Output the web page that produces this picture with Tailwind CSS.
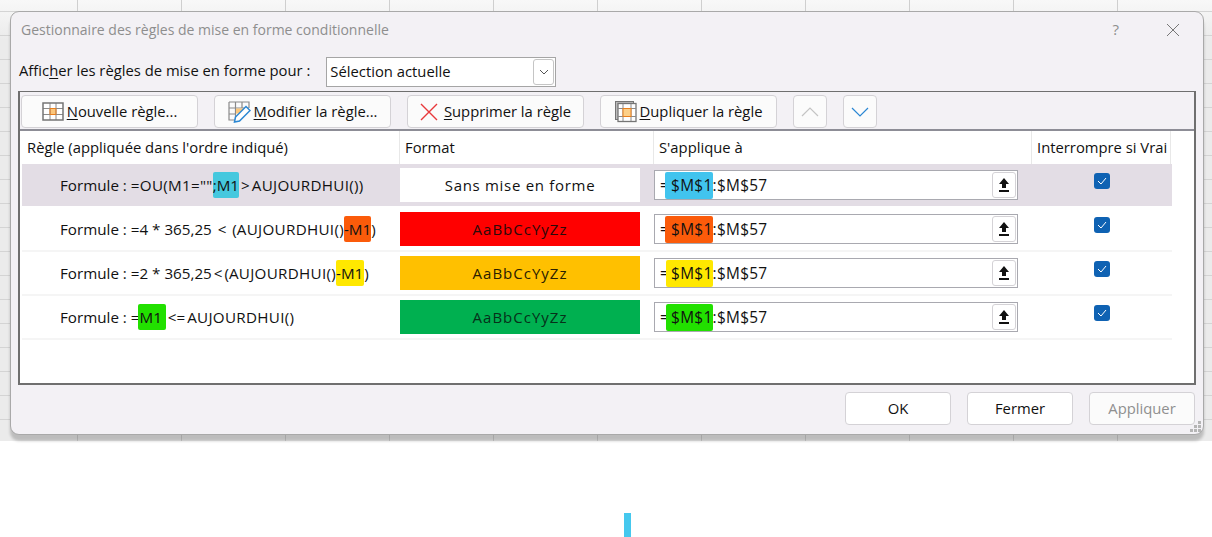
<!DOCTYPE html>
<html lang="fr">
<head>
<meta charset="UTF-8">
<title>Gestionnaire des règles de mise en forme conditionnelle</title>
<script src="https://cdn.jsdelivr.net/npm/@tailwindcss/browser@4"></script>
</head>
<body class="bg-white font-['Open_Sans',sans-serif] text-[14.8px] text-[#111] overflow-hidden">
<div class="w-[1212px] h-[537px] flex flex-col">
  <!-- excel sheet behind the dialog -->
  <div class="h-[441px] pt-[11px] pl-[10px] bg-[linear-gradient(to_right,#cfcfcf_1px,transparent_1px),linear-gradient(to_bottom,#d4d4d4_1px,transparent_1px),linear-gradient(to_bottom,#f8f8f8,#ebebeb_40px)] bg-[size:104px_24px,104px_24px,100%_100%] bg-[position:77px_11px,77px_11px,0_0]">
    <div class="w-[1194px] h-[424px] flex flex-col bg-[#f3f1f5] border border-[#a9a9a9] rounded-[9px] shadow-[0_6px_3px_rgba(0,0,0,0.2)]">
      <!-- title -->
      <div class="h-[35px] flex items-center pl-[10px] pr-[23px] text-[#8e8e8e] text-[14px]">
        <span>Gestionnaire des règles de mise en forme conditionnelle</span>
        <span class="ml-auto text-[15px]">?</span>
        <svg class="ml-[47px]" width="14" height="14" viewBox="0 0 14 14"><path d="M1 1l12 12M13 1L1 13" stroke="#777" stroke-width="1" fill="none"/></svg>
      </div>
      <!-- show rules for -->
      <div class="h-[34px] mt-[8px] flex items-center pl-[8px]">
        <span class="mr-[16px] -mt-[4px]">Affic<span class="underline underline-offset-2">h</span>er les règles de mise en forme pour :</span>
        <div class="w-[230px] h-[30px] bg-white border border-[#a5a5a5] flex items-center justify-between pl-[3px] pr-[1px]">
          <span class="-mt-[1px]">Sélection actuelle</span>
          <span class="w-[21px] h-[26px] border border-[#c5c5c5] rounded-[3px] flex items-center justify-center">
            <svg width="10" height="6" viewBox="0 0 10 6"><path d="M1 1l4 4 4-4" stroke="#555" fill="none"/></svg>
          </span>
        </div>
      </div>
      <!-- rules box -->
      <div class="w-[1178px] h-[294px] ml-[7px] mt-[2px] border-2 border-t border-[#6f6f6f] flex flex-col">
        <div class="h-[39px] flex items-start pt-[3px] pl-[1px] border-b-2 border-[#8d8d96]">
          <button class="w-[177px] h-[33px] bg-[#fbfbfb] border border-[#d4d2d6] rounded-[4px] flex items-center justify-center gap-[3px]">
            <svg width="22" height="19" viewBox="0 0 22 19"><rect x="1" y="1" width="20" height="17" fill="#fff"/><rect x="8" y="6.500" width="6" height="6" fill="#fbc77d"/><path d="M8 1v17M14 1v17M1 6.500h20M1 12.500h20" stroke="#8a8a8a" fill="none"/><path d="M8 6.500h6v6H8z" fill="none" stroke="#e87f1e"/><rect x="1" y="1" width="20" height="17" fill="none" stroke="#757575" stroke-width="1.500"/></svg>
            <span><span class="underline underline-offset-2">N</span>ouvelle règle...</span>
          </button>
          <button class="w-[177px] h-[33px] ml-[16px] bg-[#fbfbfb] border border-[#d4d2d6] rounded-[4px] flex items-center justify-center gap-[3px]">
            <svg width="23" height="23" viewBox="0 0 23 23"><path d="M1 2h20v6M1 2v18h7M7.500 2v18M14 2v6M1 8h20M1 14h7" stroke="#8a8a8a" stroke-width="1.200" fill="none"/><rect x="8" y="8.500" width="8" height="5" fill="#fbc77d"/><path d="M6.500 22l1-5L18 6.500l4 4L11.500 21z" fill="#fff" stroke="#2b87d3" stroke-width="1.500"/></svg>
            <span><span class="underline underline-offset-2">M</span>odifier la règle...</span>
          </button>
          <button class="w-[177px] h-[33px] ml-[16px] bg-[#fbfbfb] border border-[#d4d2d6] rounded-[4px] flex items-center justify-center gap-[6px]">
            <svg width="18" height="18" viewBox="0 0 18 18"><path d="M1 1l16 16M17 1L1 17" stroke="#e8383b" stroke-width="1.400" fill="none"/></svg>
            <span><span class="underline underline-offset-2">S</span>upprimer la règle</span>
          </button>
          <button class="w-[177px] h-[33px] ml-[16px] bg-[#fbfbfb] border border-[#d4d2d6] rounded-[4px] flex items-center justify-center gap-[3px]">
            <svg width="22" height="22" viewBox="0 0 22 22"><rect x="0.500" y="0.500" width="18" height="18" fill="#bbb" stroke="#757575"/><rect x="3" y="2.500" width="18" height="18" fill="#fff" stroke="#757575" stroke-width="1.300"/><path d="M8 3v17M16 3v17M3 7.500h18M3 15.500h18" stroke="#8a8a8a" fill="none"/><rect x="8" y="7.500" width="8" height="8" fill="#fcd089" stroke="#e87f1e"/></svg>
            <span><span class="underline underline-offset-2">D</span>upliquer la règle</span>
          </button>
          <button class="w-[34px] h-[33px] ml-[16px] bg-[#fbfbfb] border border-[#d4d2d6] rounded-[4px] flex items-center justify-center">
            <svg width="18" height="10" viewBox="0 0 18 10"><path d="M1 9l8-8 8 8" stroke="#c4c4c4" stroke-width="1.200" fill="none"/></svg>
          </button>
          <button class="w-[34px] h-[33px] ml-[16px] bg-[#fbfbfb] border border-[#d4d2d6] rounded-[4px] flex items-center justify-center">
            <svg width="18" height="10" viewBox="0 0 18 10"><path d="M1 1l8 8 8-8" stroke="#2b87d3" stroke-width="1.200" fill="none"/></svg>
          </button>
        </div>
        <div class="flex-1 bg-white">
          <!-- header -->
          <div class="h-[33px] flex items-center">
            <div class="w-[380px] h-full pl-[7px] flex items-center border-r border-[#e8e8e8]">Règle (appliquée dans l'ordre indiqué)</div>
            <div class="w-[254px] h-full pl-[5px] flex items-center border-r border-[#e8e8e8]">Format</div>
            <div class="w-[378px] h-full pl-[5px] flex items-center border-r border-[#e8e8e8]">S'applique à</div>
            <div class="w-[139px] h-full pl-[5px] flex items-center border-r border-[#e8e8e8] whitespace-nowrap">Interrompre si Vrai</div>
          </div>
          <!-- rows -->
          <div class="w-[1150px] h-[44px] flex items-center bg-[#e3dde5] border-b-2 border-white ml-[2px]">
            <div class="w-[378px] pl-[38px] whitespace-nowrap text-[15.2px]">Formule : <span class="tracking-[0.3px]">=OU(M1=""</span><span class="bg-[#45c8de] py-[3px] rounded-[2px]">;M1</span><span class="mx-[2px]">&gt;</span><span class="tracking-[0.3px]">AUJOURDHUI())</span></div>
            <div class="w-[240px] h-[34px] bg-white flex items-center justify-center text-[15px] tracking-[0.7px]">Sans mise en forme</div>
            <div class="w-[364px] h-[30px] ml-[14px] bg-white border border-[#a9a9b0] flex items-center pl-[5px] pr-[1px] text-[15.4px] tracking-[0.3px]">
              <span class="pt-[2px]">=<span class="bg-[#41c4ee] py-[3px] pl-[6px] -ml-[4px] rounded-[2px]">$M$1</span>:$M$57</span>
              <span class="ml-auto w-[24px] h-[26px] border border-[#d4d2d6] rounded-[3px] bg-white flex items-center justify-center">
                <svg width="10" height="14" viewBox="0 0 10 14"><path d="M5 0L0 6h3v4h4V6h3zM0 12h10v2H0z" fill="#111"/></svg>
              </span>
            </div>
            <div class="w-[154px] pl-[76px]">
              <span class="w-[16px] h-[16px] bg-[#0f62b3] rounded-[3px] flex items-center justify-center -mt-[8px]">
                <svg width="10" height="8" viewBox="0 0 10 8"><path d="M1 4l3 3 5-6" stroke="#fff" stroke-width="1" fill="none"/></svg>
              </span>
            </div>
          </div>
          <div class="w-[1150px] h-[44px] flex items-center border-b-2 border-[#f5f5f5] ml-[2px]">
            <div class="w-[378px] pl-[38px] whitespace-nowrap text-[15.2px]">Formule : =4 * 365,25 <span class="mx-[2px]">&lt;</span> (<span class="tracking-[0.3px]">AUJOURDHUI()</span><span class="bg-[#fb5b0a] py-[3px] rounded-[2px]">-M1</span>)</div>
            <div class="w-[240px] h-[34px] bg-[#ff0000] flex items-center justify-center text-[15px] tracking-[1px] text-[#2a0a0a]">AaBbCcYyZz</div>
            <div class="w-[364px] h-[30px] ml-[14px] bg-white border border-[#a9a9b0] flex items-center pl-[5px] pr-[1px] text-[15.4px] tracking-[0.3px]">
              <span class="pt-[2px]">=<span class="bg-[#fb5b0a] py-[3px] pl-[6px] -ml-[4px] rounded-[2px]">$M$1</span>:$M$57</span>
              <span class="ml-auto w-[24px] h-[26px] border border-[#d4d2d6] rounded-[3px] bg-white flex items-center justify-center">
                <svg width="10" height="14" viewBox="0 0 10 14"><path d="M5 0L0 6h3v4h4V6h3zM0 12h10v2H0z" fill="#111"/></svg>
              </span>
            </div>
            <div class="w-[154px] pl-[76px]">
              <span class="w-[16px] h-[16px] bg-[#0f62b3] rounded-[3px] flex items-center justify-center -mt-[8px]">
                <svg width="10" height="8" viewBox="0 0 10 8"><path d="M1 4l3 3 5-6" stroke="#fff" stroke-width="1" fill="none"/></svg>
              </span>
            </div>
          </div>
          <div class="w-[1150px] h-[44px] flex items-center border-b-2 border-[#f5f5f5] ml-[2px]">
            <div class="w-[378px] pl-[38px] whitespace-nowrap text-[15.2px]">Formule : =2 * 365,25<span class="mx-[2px]">&lt;</span>(<span class="tracking-[0.3px]">AUJOURDHUI()</span><span class="bg-[#ffe800] py-[3px] pr-[1px] rounded-[2px]">-M1</span>)</div>
            <div class="w-[240px] h-[34px] bg-[#ffc000] flex items-center justify-center text-[15px] tracking-[1px] text-[#2a2000]">AaBbCcYyZz</div>
            <div class="w-[364px] h-[30px] ml-[14px] bg-white border border-[#a9a9b0] flex items-center pl-[5px] pr-[1px] text-[15.4px] tracking-[0.3px]">
              <span class="pt-[2px]">=<span class="bg-[#ffe800] py-[3px] pl-[5px] -ml-[3px] rounded-[2px]">$M$1</span>:$M$57</span>
              <span class="ml-auto w-[24px] h-[26px] border border-[#d4d2d6] rounded-[3px] bg-white flex items-center justify-center">
                <svg width="10" height="14" viewBox="0 0 10 14"><path d="M5 0L0 6h3v4h4V6h3zM0 12h10v2H0z" fill="#111"/></svg>
              </span>
            </div>
            <div class="w-[154px] pl-[76px]">
              <span class="w-[16px] h-[16px] bg-[#0f62b3] rounded-[3px] flex items-center justify-center -mt-[8px]">
                <svg width="10" height="8" viewBox="0 0 10 8"><path d="M1 4l3 3 5-6" stroke="#fff" stroke-width="1" fill="none"/></svg>
              </span>
            </div>
          </div>
          <div class="w-[1150px] h-[44px] flex items-center border-b-2 border-[#f5f5f5] ml-[2px]">
            <div class="w-[378px] pl-[38px] whitespace-nowrap text-[15.2px]">Formule : =<span class="bg-[#22e000] py-[3px] pl-[1px] -ml-[1px] pr-[4px] rounded-[2px]">M1</span><span class="mx-[2px]">&lt;=</span><span class="tracking-[0.3px]">AUJOURDHUI()</span></div>
            <div class="w-[240px] h-[34px] bg-[#00b050] flex items-center justify-center text-[15px] tracking-[1px] text-[#06301a]">AaBbCcYyZz</div>
            <div class="w-[364px] h-[30px] ml-[14px] bg-white border border-[#a9a9b0] flex items-center pl-[5px] pr-[1px] text-[15.4px] tracking-[0.3px]">
              <span class="pt-[2px]">=<span class="bg-[#22e000] py-[3px] pl-[5px] -ml-[3px] rounded-[2px]">$M$1</span>:$M$57</span>
              <span class="ml-auto w-[24px] h-[26px] border border-[#d4d2d6] rounded-[3px] bg-white flex items-center justify-center">
                <svg width="10" height="14" viewBox="0 0 10 14"><path d="M5 0L0 6h3v4h4V6h3zM0 12h10v2H0z" fill="#111"/></svg>
              </span>
            </div>
            <div class="w-[154px] pl-[76px]">
              <span class="w-[16px] h-[16px] bg-[#0f62b3] rounded-[3px] flex items-center justify-center -mt-[8px]">
                <svg width="10" height="8" viewBox="0 0 10 8"><path d="M1 4l3 3 5-6" stroke="#fff" stroke-width="1" fill="none"/></svg>
              </span>
            </div>
          </div>
        </div>
      </div>
      <!-- footer -->
      <div class="relative flex-1 flex justify-end items-start pt-[7px] pr-[8px] gap-[16px]">
        <button class="w-[106px] h-[33px] bg-white border border-[#d4d2d6] rounded-[4px]">OK</button>
        <button class="w-[106px] h-[33px] bg-white border border-[#d4d2d6] rounded-[4px]">Fermer</button>
        <button class="w-[106px] h-[33px] bg-[#fbfbfb] border border-[#d4d2d6] rounded-[4px] text-[#8f8f8f]">Appliquer</button>
        <svg class="absolute right-[1px] bottom-[1px]" width="12" height="12" viewBox="0 0 12 12"><path d="M8 0h3v3H8zM4 4h3v3H4zM8 4h3v3H8zM0 8h3v3H0zM4 8h3v3H4zM8 8h3v3H8z" fill="#b5b5b5"/></svg>
      </div>
    </div>
  </div>
  <!-- text cursor mark under the sheet -->
  <div class="w-[7px] h-[24px] ml-[624px] mt-[72px] bg-[#45c8ee]"></div>
</div>
</body>
</html>
